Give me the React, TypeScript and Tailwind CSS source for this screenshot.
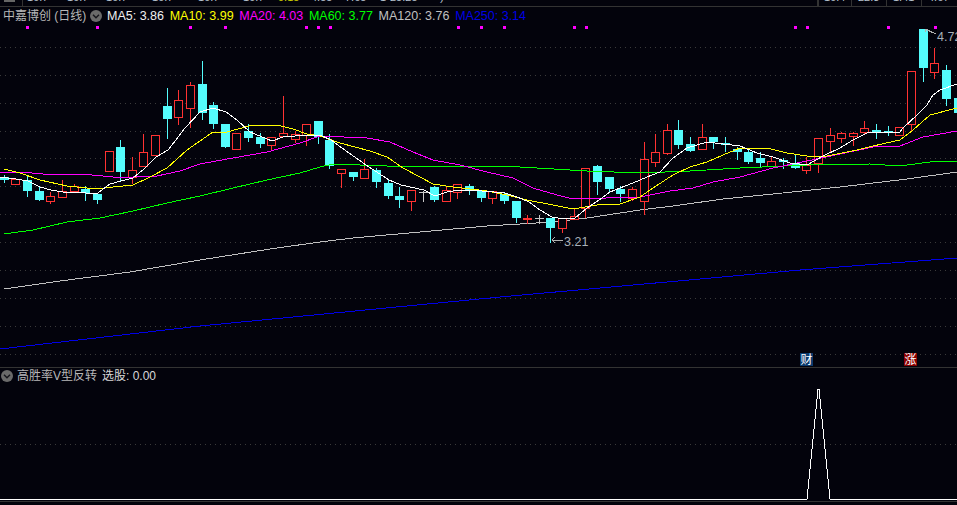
const BG = "#03030c";
const RED = "#ff3232";
const CYAN = "#54fcfc";

// kind, body top, body bottom, wick top, wick bottom
type Candle = [string, number, number, number, number];

const candles: Candle[] = [
  ["c", 177, 180, 175, 182],
  ["r", 179, 184, 179, 184],
  ["c", 180, 191, 175, 196],
  ["c", 191, 200, 186, 200],
  ["r", 196, 201, 192, 203],
  ["r", 191, 197, 180, 197],
  ["r", 186, 191, 184, 191],
  ["c", 189, 193, 186, 200],
  ["c", 194, 200, 194, 203],
  ["r", 151, 171, 151, 171],
  ["c", 147, 172, 140, 180],
  ["r", 170, 177, 157, 183],
  ["r", 152, 166, 134, 166],
  ["r", 135, 155, 135, 155],
  ["c", 106, 119, 88, 138],
  ["r", 100, 117, 90, 124],
  ["r", 85, 108, 82, 127],
  ["c", 84, 113, 61, 119],
  ["c", 105, 124, 102, 128],
  ["c", 124, 147, 124, 147],
  ["r", 133, 149, 133, 149],
  ["c", 131, 138, 124, 141],
  ["c", 137, 144, 133, 147],
  ["r", 137, 145, 137, 149],
  ["r", 133, 136, 96, 136],
  ["r", 134, 139, 131, 142],
  ["r", 124, 135, 124, 145],
  ["c", 121, 137, 121, 143],
  ["c", 140, 166, 134, 168],
  ["r", 169, 173, 169, 187],
  ["c", 172, 177, 172, 180],
  ["r", 169, 178, 159, 178],
  ["c", 170, 182, 168, 187],
  ["c", 183, 196, 179, 198],
  ["c", 196, 200, 187, 207],
  ["r", 190, 201, 190, 210],
  ["w", 192, 192, 191, 201],
  ["c", 187, 200, 186, 201],
  ["r", 190, 201, 186, 201],
  ["r", 184, 192, 184, 198],
  ["c", 186, 191, 184, 194],
  ["c", 190, 198, 190, 201],
  ["r", 191, 198, 191, 203],
  ["c", 194, 201, 193, 203],
  ["c", 201, 218, 201, 222],
  ["d", 218, 219, 215, 223],
  ["w", 218, 218, 215, 223],
  ["c", 218, 228, 218, 242],
  ["r", 218, 228, 218, 232],
  ["r", 216, 219, 208, 219],
  ["r", 168, 208, 168, 217],
  ["c", 166, 182, 165, 194],
  ["c", 177, 189, 177, 191],
  ["c", 189, 194, 186, 201],
  ["r", 189, 198, 187, 200],
  ["r", 159, 201, 142, 214],
  ["r", 152, 162, 134, 166],
  ["r", 130, 153, 124, 154],
  ["c", 130, 145, 120, 148],
  ["c", 144, 151, 137, 151],
  ["r", 137, 149, 124, 149],
  ["c", 137, 142, 137, 148],
  ["c", 143, 145, 137, 151],
  ["c", 149, 152, 147, 159],
  ["c", 152, 162, 149, 163],
  ["c", 158, 163, 152, 167],
  ["r", 161, 166, 157, 166],
  ["c", 160, 162, 158, 168],
  ["c", 163, 168, 155, 168],
  ["r", 165, 170, 157, 173],
  ["r", 138, 163, 138, 172],
  ["r", 135, 141, 128, 152],
  ["r", 133, 138, 132, 142],
  ["r", 133, 136, 132, 145],
  ["r", 128, 132, 121, 133],
  ["c", 130, 133, 124, 138],
  ["c", 131, 133, 126, 135],
  ["r", 127, 135, 127, 135],
  ["r", 71, 124, 71, 130],
  ["c", 29, 68, 29, 81],
  ["r", 63, 72, 48, 78],
  ["c", 70, 99, 65, 105],
  ["c", 98, 113, 98, 113],
];

const ma5 = "0,177 16,179 28,181 40,187 51,190 63,192 75,192 86,193 98,193 110,184 121,181 133,178 144,169 156,157 168,150 179,136 185,128 200,112 213,108 226,112 237,120 250,132 272,141 283,137 307,135 320,135 331,140 342,148 366,165 389,180 401,185 424,190 435,196 447,192 459,190 482,191 505,193 517,197 529,202 540,210 552,217 564,219 575,218 587,208 599,200 610,192 620,188 633,183 647,177 660,172 673,158 687,148 707,142 723,144 740,146 757,153 773,157 790,163 807,165 823,156 840,148 853,140 867,133 900,132 903,128 917,115 927,105 933,95 940,90 957,84";
const ma10 = "4,169 20,173 40,180 67,186 97,189 113,187 133,185 150,177 167,168 187,150 213,132 227,132 253,125 277,125 293,129 307,134 320,136 340,143 370,151 387,157 403,168 420,177 433,184 453,187 487,191 507,195 527,200 553,205 573,209 597,205 620,204 640,197 653,188 673,175 690,167 707,162 723,155 740,148 767,148 787,153 807,156 827,156 857,150 873,146 900,140 913,130 930,115 957,108";
const ma20 = "0,172 20,172 43,174 80,174 103,176 113,177 133,177 157,176 180,171 200,164 233,158 267,152 300,143 320,136 367,138 390,142 413,152 433,160 460,165 487,172 513,178 533,188 557,195 573,199 640,197 670,191 693,188 713,182 740,177 773,168 807,161 840,154 873,147 900,146 923,137 957,131";
const ma60 = "4,234 33,230 67,222 100,218 133,211 167,203 200,196 233,188 267,180 300,173 320,167 333,164 387,166 453,166 520,167 587,171 640,173 690,171 740,168 807,165 870,164 900,166 930,162 957,161";
const ma120 = "4,289 60,281 130,272 200,260 270,249 320,242 353,238 420,232 487,226 553,222 587,218 640,210 673,206 723,199 773,194 840,187 907,179 957,172";
const ma250 = "0,349 200,326 500,297 800,270 957,258";

const gridMain = [47, 75, 103, 131, 158, 186, 214, 242, 270, 298, 326, 354];
const marks = [26, 96, 189, 224, 305, 317, 329, 457, 480, 503, 573, 585, 794, 806, 887, 934];

function Candles() {
  return (
    <g shapeRendering="crispEdges">
      {candles.map(([kind, top, bottom, wickTop, wickBottom], i) => {
        const left = Math.floor(11.63 * i + 0.35);
        const color = kind === "c" ? CYAN : kind === "w" ? "#c8c8c8" : RED;
        return (
          <g key={i}>
            <line x1={left + 4.5} x2={left + 4.5} y1={wickTop} y2={wickBottom + 1} stroke={color} />
            {kind === "c" && <rect x={left} y={top} width={9} height={bottom - top} fill={CYAN} />}
            {kind === "r" && (
              <rect x={left + 0.5} y={top + 0.5} width={8} height={bottom - top} fill={BG} stroke={RED} />
            )}
            {(kind === "w" || kind === "d") && <rect x={left} y={top} width={9} height={kind === "d" ? 2 : 1} fill={color} />}
          </g>
        );
      })}
    </g>
  );
}

function Chevron() {
  return (
    <svg width="12" height="12" viewBox="0 0 12 12" className="shrink-0">
      <circle cx="6" cy="6" r="6" fill="#6a6a6a" />
      <path d="M3 4.8 L6 7.8 L9 4.8" fill="none" stroke="#16161c" strokeWidth="1.4" />
    </svg>
  );
}

function MainChart() {
  return (
    <svg className="absolute inset-0" width="957" height="360" viewBox="0 7 957 360">
      {gridMain.map((y) => (
        <line key={y} x1="0" x2="957" y1={y + 0.5} y2={y + 0.5} stroke="#3a3a3a" strokeDasharray="1 4" />
      ))}
      {marks.map((x) => (
        <rect key={x} x={x} y="26" width="3" height="3" fill="#ff00ff" shapeRendering="crispEdges" />
      ))}
      <polyline points={ma250} fill="none" stroke="#0000e6" shapeRendering="crispEdges" />
      <polyline points={ma120} fill="none" stroke="#c0c0c0" shapeRendering="crispEdges" />
      <Candles />
      <polyline points={ma60} fill="none" stroke="#00ff00" shapeRendering="crispEdges" />
      <polyline points={ma20} fill="none" stroke="#ff00ff" shapeRendering="crispEdges" />
      <polyline points={ma10} fill="none" stroke="#ffff00" shapeRendering="crispEdges" />
      <polyline points={ma5} fill="none" stroke="#ffffff" shapeRendering="crispEdges" />
      {/* high / low leaders */}
      <path d="M925 29 L936 34 M925 29 L928 29 M925 29 L926 32" fill="none" stroke="#b0b0b0" shapeRendering="crispEdges" />
      <path d="M552 240 L563 240 M552 240 L555 237 M552 240 L555 243" fill="none" stroke="#b0b0b0" shapeRendering="crispEdges" />
    </svg>
  );
}

function SubChart() {
  return (
    <svg className="absolute inset-0" width="957" height="137" viewBox="0 368 957 137">
      <line x1="0" x2="957" y1="444.5" y2="444.5" stroke="#3a3a3a" strokeDasharray="1 4" />
      <polyline points="0,499 807,499 818,389 819,389 830,499 957,499" fill="none" stroke="#ffffff" shapeRendering="crispEdges" />
      <line x1="0" x2="957" y1="501.5" y2="501.5" stroke="#333333" />
    </svg>
  );
}

export default function App() {
  return (
    <div
      className="flex h-screen w-full flex-col overflow-hidden bg-[#03030c] text-[12px] text-[#b8b8b8]"
      style={{ fontFamily: '"Liberation Sans", "Noto Sans CJK SC", sans-serif' }}
    >
      {/* top strip, clipped like the original */}
      <div className="flex h-[7px] shrink-0 overflow-hidden border-b border-[#333333] text-[11px] leading-[12px] text-[#b8c4d0]">
        <div className="h-full w-[23px] shrink-0 border-r border-[#333333] pl-[4px]">
          <div className="h-[2px] w-[11px] bg-[#666666]" />
        </div>
        <div className="-mt-[9px] flex flex-1 pl-[4px]">
          <span className="w-[40px]">16.7</span>
          <span className="w-[39px]">16.7</span>
          <span className="w-[46px]">16.7</span>
          <span className="w-[46px]">16.7</span>
          <span className="w-[45px]">16.7</span>
          <span className="w-[35px]">16.7</span>
          <span className="w-[33px] text-[#d0d000]">9.15</span>
          <span className="w-[34px]">4.55</span>
          <span className="w-[35px]">7.65</span>
          <span className="w-[10px]">1</span>
          <span className="w-[50px]">25.25</span>
          <span>)</span>
        </div>
        <div className="-mt-[9px] flex">
          <span className="w-[34px] border-l-2 border-[#333333] pl-[5px]">16.4</span>
          <span className="w-[35px] border-l border-[#333333] pl-[6px]">22.3</span>
          <span className="w-[35px] border-l border-[#333333] pl-[6px]">1.41</span>
          <span className="w-[36px] border-l border-[#333333] pl-[6px]">4.67</span>
        </div>
      </div>

      {/* main pane */}
      <div className="relative h-[360px] shrink-0">
        <MainChart />
        <div className="relative flex h-[18px] items-center pl-[3px]">
          <span className="w-[87px]">中嘉博创 (日线)</span>
          <Chevron />
          <div className="ml-[5px] flex gap-[5.7px] text-[12.5px]">
            <span className="text-[#f0f0f0]">MA5: 3.86</span>
            <span className="text-[#ffff00]">MA10: 3.99</span>
            <span className="text-[#ff00ff]">MA20: 4.03</span>
            <span className="text-[#00ff00]">MA60: 3.77</span>
            <span className="text-[#c0c0c0]">MA120: 3.76</span>
            <span className="text-[#0000e6]">MA250: 3.14</span>
          </div>
        </div>
        <span className="absolute left-[564px] top-[226px] text-[12.5px] text-[#a8b0b8]">3.21</span>
        <span className="absolute left-[937px] top-[21px] text-[12.5px] text-[#a8b0b8]">4.72</span>
        <span className="absolute left-[800px] top-[346px] flex h-[13px] w-[13px] items-center justify-center bg-[#0a3a6e] leading-none text-white">财</span>
        <span className="absolute left-[904px] top-[346px] flex h-[13px] w-[13px] items-center justify-center bg-[#8a0000] leading-none text-white">涨</span>
      </div>

      {/* indicator pane */}
      <div className="relative flex-1 border-t border-[#333333]">
        <SubChart />
        <div className="relative flex h-[15px] items-center gap-[4px] pl-px">
          <Chevron />
          <span>高胜率V型反转</span>
          <span className="ml-[1px] text-[#d8d8d8]">选股: 0.00</span>
        </div>
      </div>
    </div>
  );
}
